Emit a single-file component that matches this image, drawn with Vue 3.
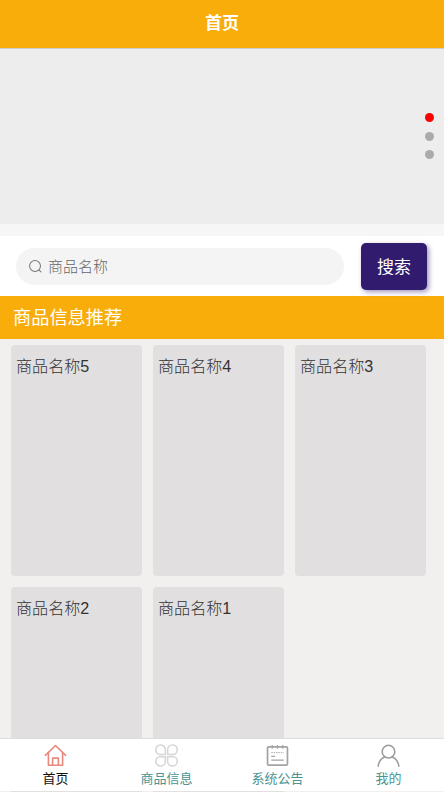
<script setup>
import { ref } from 'vue';

const keyword = ref('');
const goods = ['商品名称5', '商品名称4', '商品名称3', '商品名称2', '商品名称1'];
const tabs = [
  { name: '首页', icon: 'home', active: true },
  { name: '商品信息', icon: 'goods' },
  { name: '系统公告', icon: 'notice' },
  { name: '我的', icon: 'user' }
];
</script>

<template>
  <div class="page">
    <header class="top-bar">首页</header>

    <div class="banner">
      <div class="dots">
        <span class="dot on"></span>
        <span class="dot"></span>
        <span class="dot"></span>
      </div>
    </div>

    <div class="search-row">
      <label class="search-box">
        <svg class="search-icon" viewBox="0 0 16 16" fill="none" stroke="#777" stroke-width="1.1">
          <circle cx="7.5" cy="7.5" r="5.8" />
          <path d="M11.8 11.8l2 2" stroke-linecap="round" />
        </svg>
        <input v-model="keyword" placeholder="商品名称" />
      </label>
      <button class="search-btn">搜索</button>
    </div>

    <div class="section-title">商品信息推荐</div>

    <div class="goods-grid">
      <div v-for="item in goods" :key="item" class="goods-card">{{ item }}</div>
    </div>

    <nav class="tab-bar">
      <div v-for="tab in tabs" :key="tab.name" class="tab" :class="{ active: tab.active }">
        <svg v-if="tab.icon === 'home'" class="tab-icon" viewBox="0 0 24 24" fill="none" stroke="#e8897f" stroke-width="1.7" stroke-linejoin="round" stroke-linecap="round">
          <path d="M1.4 11.8L12 1.6l10.6 10.2" />
          <path d="M4.6 9.2V22.2h14.8V9.2" />
          <path d="M9 22.2v-7.4h6v7.4" />
        </svg>
        <svg v-else-if="tab.icon === 'goods'" class="tab-icon" viewBox="0 0 24 24" fill="none" stroke="#d6d6d6" stroke-width="1.6">
          <path d="M10.8 10.8V6A5 5 0 1 0 5.8 11z" />
          <path d="M13.2 10.8V6A5 5 0 1 1 18.2 11z" />
          <path d="M10.8 13.2V18A5 5 0 1 1 5.8 13z" />
          <path d="M13.2 13.2V18A5 5 0 1 0 18.2 13z" />
        </svg>
        <svg v-else-if="tab.icon === 'notice'" class="tab-icon" viewBox="0 0 24 24" fill="none" stroke="#a3a3a3" stroke-width="1.8">
          <rect x="1.6" y="3" width="20.8" height="19" rx="1.2" />
          <path d="M6.5 1v4M12 1v4M17.5 1v4" stroke-width="1.3" />
          <path d="M5.5 9h13" stroke-width="1" stroke-dasharray="1.5 1" />
          <path d="M5.5 13h4M5.5 16.8h13" stroke-width="1.3" />
        </svg>
        <svg v-else class="tab-icon" viewBox="0 0 24 24" fill="none" stroke="#9c9c9c" stroke-width="1.6" stroke-linecap="round">
          <circle cx="12" cy="8" r="6.6" />
          <path d="M1.2 23.2c.7-5.2 3.8-8.4 6.8-9.6M22.8 23.2c-.7-5.2-3.8-8.4-6.8-9.6" />
        </svg>
        <span class="tab-name">{{ tab.name }}</span>
      </div>
    </nav>
  </div>
</template>

<style>
html, body {
  margin: 0;
  background: #f1f0ef;
}
</style>

<style scoped>
.page {
  position: relative;
  width: 444px;
  height: 792px;
  overflow: hidden;
  background: #f1f0ef;
  font-family: "Liberation Sans", "Noto Sans CJK SC", sans-serif;
}

.top-bar {
  height: 48px;
  line-height: 48px;
  text-align: center;
  background: #f8ad0a;
  color: #fff;
  font-size: 17px;
  font-weight: 700;
  border-bottom: 1px solid #cfcdc8;
}

.banner {
  position: relative;
  height: 175px;
  background: #ededee;
}

.dots {
  position: absolute;
  right: 10px;
  top: 64px;
  display: flex;
  flex-direction: column;
  gap: 9.5px;
}

.dot {
  width: 9px;
  height: 9px;
  border-radius: 50%;
  background: #aaa;
}

.dot.on {
  background: #f00;
}

.search-row {
  display: flex;
  align-items: center;
  height: 60px;
  margin-top: 12px;
  padding: 0 16px;
  box-sizing: border-box;
  background: #fff;
  box-shadow: 0 -12px 0 #f6f6f6;
}

.search-box {
  display: flex;
  align-items: center;
  gap: 5px;
  width: 328px;
  height: 37px;
  padding-left: 12px;
  box-sizing: border-box;
  border-radius: 19px;
  background: #f4f4f4;
}

.search-icon {
  width: 15px;
  height: 15px;
  flex: none;
}

.search-box input {
  flex: 1;
  min-width: 0;
  border: 0;
  outline: 0;
  padding: 0;
  background: transparent;
  font: inherit;
  font-size: 15px;
  font-weight: 300;
}

.search-box input::placeholder {
  color: #666;
}

.search-btn {
  width: 66px;
  height: 47px;
  margin: 0 0 0 17px;
  padding: 0 0 2px;
  border: 0;
  border-radius: 5px;
  background: #311b6f;
  color: #fff;
  font: inherit;
  font-size: 17px;
  box-shadow: 2px 2px 5px rgba(49, 27, 111, 0.45);
}

.section-title {
  height: 43px;
  line-height: 45px;
  padding-left: 13px;
  background: #f8ad0a;
  color: #fff;
  font-size: 18.2px;
}

.goods-grid {
  display: grid;
  grid-template-columns: repeat(3, 131px);
  gap: 11px;
  padding: 6px 11px;
}

.goods-card {
  height: 231px;
  padding: 10px 5px;
  box-sizing: border-box;
  border-radius: 4px;
  background: #e1dfe0;
  color: #333;
  font-size: 16.1px;
  font-weight: 300;
  line-height: 23px;
}

.tab-bar {
  position: absolute;
  left: 0;
  right: 0;
  bottom: 1px;
  display: flex;
  height: 53px;
  box-sizing: border-box;
  background: #fff;
  border-top: 1px solid #dedede;
}

.tab {
  flex: 1;
  display: flex;
  flex-direction: column;
  align-items: center;
  padding-top: 5px;
  color: #4a9494;
}

.tab.active {
  color: #111;
}

.tab-icon {
  width: 23px;
  height: 23px;
}

.tab-name {
  font-size: 13px;
  line-height: 18px;
  margin-top: 3px;
}
</style>
